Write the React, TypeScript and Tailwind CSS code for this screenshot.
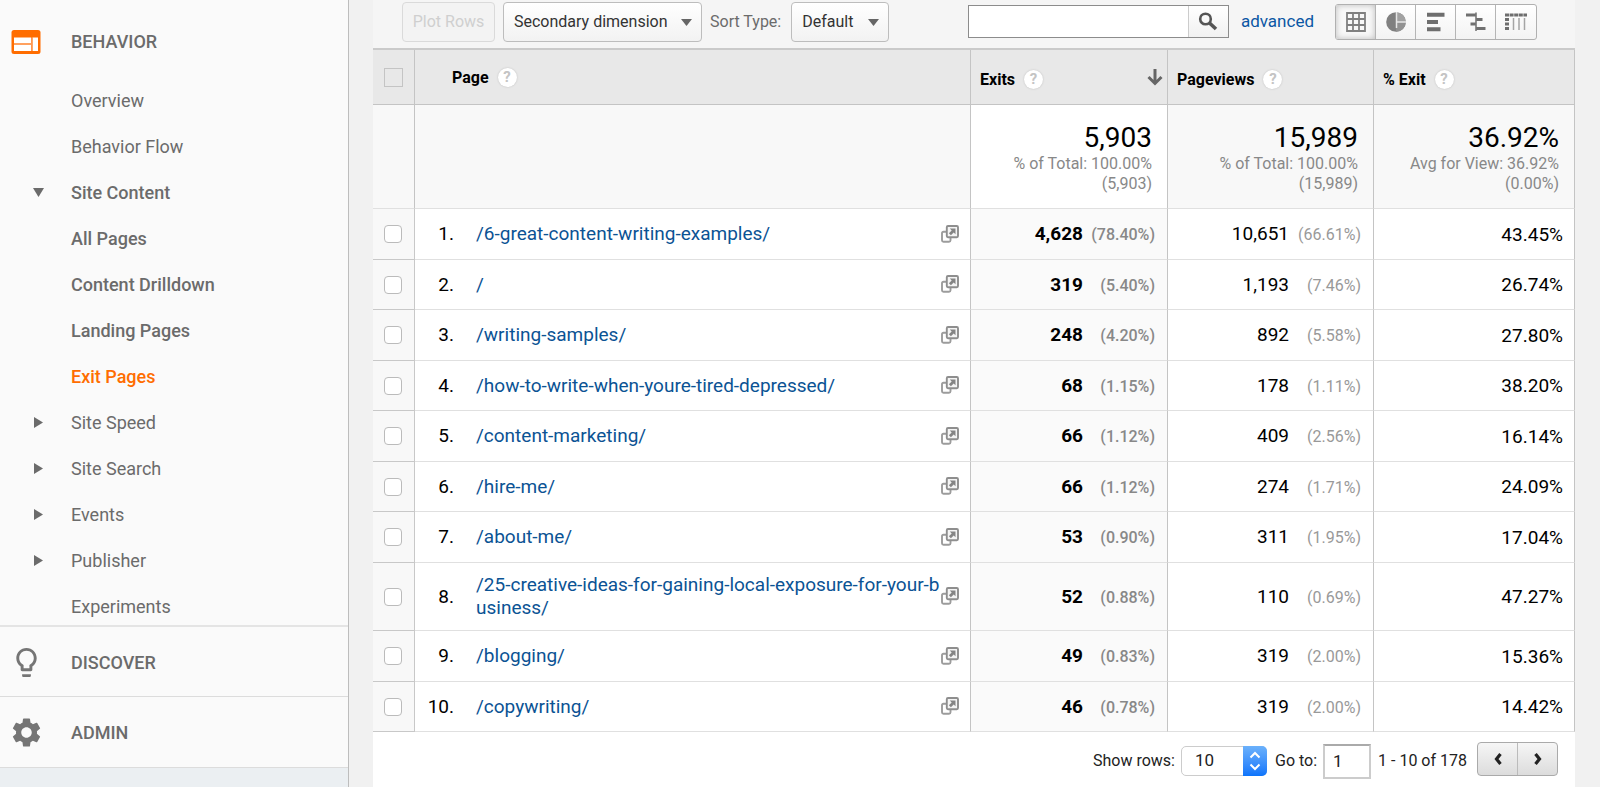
import type { ReactNode } from "react";
import { MdSettings } from "react-icons/md";

type NavItem = { label: string; kind: "link" | "sub" | "open" | "closed"; active?: boolean };

const navItems: NavItem[] = [
  { label: "Overview", kind: "link" },
  { label: "Behavior Flow", kind: "link" },
  { label: "Site Content", kind: "open" },
  { label: "All Pages", kind: "sub" },
  { label: "Content Drilldown", kind: "sub" },
  { label: "Landing Pages", kind: "sub" },
  { label: "Exit Pages", kind: "sub", active: true },
  { label: "Site Speed", kind: "closed" },
  { label: "Site Search", kind: "closed" },
  { label: "Events", kind: "closed" },
  { label: "Publisher", kind: "closed" },
  { label: "Experiments", kind: "link" },
];

const rows = [
  { page: "/6-great-content-writing-examples/", exits: "4,628", exitsPct: "78.40%", views: "10,651", viewsPct: "66.61%", rate: "43.45%" },
  { page: "/", exits: "319", exitsPct: "5.40%", views: "1,193", viewsPct: "7.46%", rate: "26.74%" },
  { page: "/writing-samples/", exits: "248", exitsPct: "4.20%", views: "892", viewsPct: "5.58%", rate: "27.80%" },
  { page: "/how-to-write-when-youre-tired-depressed/", exits: "68", exitsPct: "1.15%", views: "178", viewsPct: "1.11%", rate: "38.20%" },
  { page: "/content-marketing/", exits: "66", exitsPct: "1.12%", views: "409", viewsPct: "2.56%", rate: "16.14%" },
  { page: "/hire-me/", exits: "66", exitsPct: "1.12%", views: "274", viewsPct: "1.71%", rate: "24.09%" },
  { page: "/about-me/", exits: "53", exitsPct: "0.90%", views: "311", viewsPct: "1.95%", rate: "17.04%" },
  { page: "/25-creative-ideas-for-gaining-local-exposure-for-your-business/", exits: "52", exitsPct: "0.88%", views: "110", viewsPct: "0.69%", rate: "47.27%" },
  { page: "/blogging/", exits: "49", exitsPct: "0.83%", views: "319", viewsPct: "2.00%", rate: "15.36%" },
  { page: "/copywriting/", exits: "46", exitsPct: "0.78%", views: "319", viewsPct: "2.00%", rate: "14.42%" },
];

function BehaviorIcon() {
  return (
    <svg width="30" height="24" viewBox="0 0 30 24" className="block">
      <rect x="0.5" y="0" width="29" height="24" rx="2.5" fill="#ff6d00" />
      <path d="M3 7.5h17v6H3zM3 14.5h17v6.500H3zM21.500 7.500h5.500v13.500h-5.500z" fill="#fff" />
      <path d="M3 14h17.500M20.800 7.500v13.500" stroke="#ff9a55" strokeWidth="1.400" />
    </svg>
  );
}

function BulbIcon() {
  return (
    <svg width="35" height="35" viewBox="0 0 24 24" fill="#757575" className="block">
      <path d="M9 21c0 .5.4 1 1 1h4c.6 0 1-.5 1-1v-1H9v1zm3-19C8.100 2 5 5.100 5 9c0 2.400 1.200 4.500 3 5.700V17c0 .5.4 1 1 1h6c.6 0 1-.5 1-1v-2.300c1.800-1.300 3-3.400 3-5.700 0-3.900-3.100-7-7-7zm2.900 11.100l-.9.600V16h-4v-2.300l-.9-.600C7.800 12.200 7 10.600 7 9c0-2.800 2.200-5 5-5s5 2.200 5 5c0 1.600-.8 3.200-2.100 4.100z" />
    </svg>
  );
}

function OpenIcon() {
  return (
    <svg width="18" height="18" viewBox="0 0 18 18" fill="none" className="block">
      <path d="M5 6.800H2.500q-1.500 0-1.500 1.500v7q0 1.500 1.500 1.500H8q1.500 0 1.500-1.500V13" stroke="#9c9c9c" strokeWidth="1.900" />
      <rect x="5.800" y="1" width="11.200" height="11.200" rx="1.200" fill="#f4f4f4" stroke="#8e8e8e" strokeWidth="1.900" />
      <path d="M8.800 3.500h5.700v5.700l-1.800-1.800L9.900 10.200 7.900 8.200l2.800-2.800z" fill="#858585" />
    </svg>
  );
}

function SearchIcon() {
  return (
    <svg width="20" height="20" viewBox="0 0 20 20" fill="none" className="block">
      <circle cx="7.500" cy="7" r="5.300" stroke="#555" strokeWidth="2.600" />
      <path d="M11.500 11l6.500 6" stroke="#555" strokeWidth="3.600" />
    </svg>
  );
}

function Help({ topic }: { topic: string }) {
  return (
    <button
      type="button"
      aria-label={`Help on ${topic}`}
      className="flex h-[19px] w-[19px] items-center justify-center rounded-full bg-white text-[15px] leading-[19px] font-bold text-[#c4c4c4] shadow-[0_0_2px_#bbb]"
    >
      ?
    </button>
  );
}

function ViewButton({ label, active, children }: { label: string; active?: boolean; children: ReactNode }) {
  return (
    <button
      type="button"
      aria-label={label}
      className={
        active
          ? "flex h-full w-10 items-center justify-center border-r border-[#b5b5b5] bg-[#f8f8f8] shadow-[inset_0_0_6px_#bbb]"
          : "flex h-full w-10 items-center justify-center border-r border-[#b5b5b5] last:border-r-0"
      }
    >
      <svg width="24" height="20" viewBox="0 0 24 20" fill="none">
        {children}
      </svg>
    </button>
  );
}

function ViewSwitcher() {
  return (
    <div className="flex h-9 overflow-hidden rounded-[3px] border border-[#b0b0b0] bg-linear-to-b from-white to-[#f3f3f3]">
      <ViewButton label="Table" active>
        <path d="M3 1h18v18H3zM3 7h18M3 13h18M9 1v18M15 1v18" stroke="#808080" strokeWidth="1.800" />
      </ViewButton>
      <ViewButton label="Percentage">
        <circle cx="12" cy="10" r="9.800" fill="#808080" />
        <path d="M12 .2a9.800 9.800 0 0 1 9.800 9.800H12z" fill="#a2a2a2" />
        <path d="M12 10h9.800a9.800 9.800 0 0 1-9.800 9.800z" fill="#929292" />
        <path d="M12.500 0v16M12 10h10" stroke="#e6e6e6" strokeWidth="1.500" />
      </ViewButton>
      <ViewButton label="Performance">
        <path d="M3 2.800h17.500M3 10h11M3 17.200h13.500" stroke="#6e6e6e" strokeWidth="4" />
      </ViewButton>
      <ViewButton label="Comparison">
        <path d="M2 3h10M12 7.500h6.500M6.500 12h5.500M12 16.500h9.500" stroke="#707070" strokeWidth="2.800" />
        <path d="M12 .5v18.500" stroke="#777" strokeWidth="1.600" />
      </ViewButton>
      <ViewButton label="Pivot">
        <path d="M1 3h22" stroke="#6e6e6e" strokeWidth="3" strokeDasharray="4 .600" />
        <path d="M1 7.500h4M1 12h4M1 16.500h4" stroke="#6e6e6e" strokeWidth="3" />
        <path d="M9.500 6v12M15 6v12M20.500 6v12" stroke="#a5a5a5" strokeWidth="1.500" />
      </ViewButton>
    </div>
  );
}

function DropDown({ label, value, width }: { label: string; value: string; width: string }) {
  return (
    <span className={`relative block ${width}`}>
      <select
        aria-label={label}
        className="h-10 w-full appearance-none rounded-[4px] border border-[#bdbdbd] bg-linear-to-b from-white to-[#f2f2f2] pl-[10px] text-[16px] text-[#333]"
      >
        <option>{value}</option>
      </select>
      <svg width="11" height="7" viewBox="0 0 11 7" className="pointer-events-none absolute top-[17px] right-[10px]">
        <path d="M0 0h11L5.500 7z" fill="#666" />
      </svg>
    </span>
  );
}

function Sidebar() {
  return (
    <nav className="flex w-[349px] shrink-0 flex-col border-r border-[#bdbdbd] bg-[#fafafa] text-[18px] text-[#6b6b6b]">
      <a href="#behavior" className="flex h-[81px] items-center pt-[2px] pl-[11px] font-medium">
        <span className="w-[60px]">
          <BehaviorIcon />
        </span>
        BEHAVIOR
      </a>
      <ul className="flex flex-col gap-2 border-b-2 border-[#e4e4e4]">
        {navItems.map((item) => (
          <li key={item.label}>
            <a
              href={`#${item.label}`}
              className={
                item.active
                  ? "flex h-[38px] items-center font-medium text-[#ff6d00]"
                  : item.kind === "sub" || item.kind === "open"
                    ? "flex h-[38px] items-center font-medium"
                    : "flex h-[38px] items-center"
              }
            >
              <span className="flex w-[71px] shrink-0 justify-center pl-[6px]">
                {item.kind === "open" && (
                  <svg width="11" height="9" viewBox="0 0 11 9">
                    <path d="M0 0h11L5.500 9z" fill="#6b6b6b" />
                  </svg>
                )}
                {item.kind === "closed" && (
                  <svg width="9" height="11" viewBox="0 0 9 11">
                    <path d="M0 0v11l9-5.500z" fill="#6b6b6b" />
                  </svg>
                )}
              </span>
              {item.label}
            </a>
          </li>
        ))}
      </ul>
      <a href="#discover" className="flex h-[70px] items-center border-b border-[#dcdcdc] pt-px pl-[9px] font-medium">
        <span className="w-[62px]">
          <BulbIcon />
        </span>
        DISCOVER
      </a>
      <a href="#admin" className="flex h-[71px] items-center border-b border-[#dcdcdc] pt-px pl-[9px] font-medium">
        <span className="w-[62px]">
          <MdSettings className="block h-[35px] w-[35px] text-[#757575]" />
        </span>
        ADMIN
      </a>
      <div className="grow bg-[#ebeff2]" />
    </nav>
  );
}

function Toolbar() {
  return (
    <div className="flex h-12 items-center bg-[#f5f5f5] pr-[38px] pb-[5px] pl-[29px]">
      <button
        type="button"
        disabled
        className="h-10 w-[93px] rounded-[4px] border border-[#dadada] bg-[#f3f3f3] text-[16px] text-[#cfcfcf]"
      >
        Plot Rows
      </button>
      <div className="ml-2">
        <DropDown label="Secondary dimension" value="Secondary dimension" width="w-[199px]" />
      </div>
      <span className="ml-2 text-[16px] text-[#6b6b6b]">Sort Type:</span>
      <div className="ml-[10px]">
        <DropDown label="Sort type" value="Default" width="w-[98px]" />
      </div>
      <form className="ml-auto flex h-[33px] w-[261px] border border-[#8c8c8c]">
        <input type="search" aria-label="Search table" className="min-w-0 grow bg-white px-2 text-[16px] outline-none" />
        <button
          type="button"
          aria-label="Search"
          className="flex w-10 items-center justify-center border-l border-[#ccc] bg-linear-to-b from-white to-[#f1f1f1]"
        >
          <SearchIcon />
        </button>
      </form>
      <a href="#advanced" className="mr-[21px] ml-3 text-[17px] text-[#0b57a4]">
        advanced
      </a>
      <ViewSwitcher />
    </div>
  );
}

function MetricHead({ label, sorted }: { label: string; sorted?: boolean }) {
  return (
    <th className="border-r border-b border-[#c4c4c4] pt-[5px] pl-[9px] text-left font-bold">
      <div className="flex items-center gap-[9px]">
        {label}
        <Help topic={label} />
        {sorted && (
          <svg width="16" height="17" viewBox="0 0 16 17" fill="none" className="mr-1 mb-1 ml-auto">
            <path d="M8 0v14M1.500 8L8 14.500 14.500 8" stroke="#666" strokeWidth="3" />
          </svg>
        )}
      </div>
    </th>
  );
}

function Total({ value, note, detail, sorted }: { value: string; note: string; detail: string; sorted?: boolean }) {
  return (
    <td
      className={
        sorted
          ? "border-r border-b border-r-[#c4c4c4] border-b-[#e0e0e0] bg-white pt-[3px] pr-[15px] text-right"
          : "border-r border-b border-r-[#c4c4c4] border-b-[#e0e0e0] pt-[3px] pr-[15px] text-right"
      }
    >
      <div className="text-[28px] leading-8">{value}</div>
      <div className="text-[16px] leading-5 text-[#888]">{note}</div>
      <div className="text-[16px] leading-5 text-[#888]">{detail}</div>
    </td>
  );
}

function ReportTable() {
  return (
    <table className="w-full table-fixed border-separate border-spacing-0 border-t-2 border-[#cacaca] text-black">
      <colgroup>
        <col className="w-[42px]" />
        <col />
        <col className="w-[197px]" />
        <col className="w-[206px]" />
        <col className="w-[201px]" />
      </colgroup>
      <thead>
        <tr className="h-[55px] bg-[#e8e8e8] text-[16px]">
          <th className="border-r border-b border-[#c4c4c4]">
            <input
              type="checkbox"
              aria-label="Select all rows"
              className="mx-auto block h-[19px] w-[19px] appearance-none border border-[#c4c4c4]"
            />
          </th>
          <th className="border-r border-b border-[#c4c4c4] pt-px pl-[37px] text-left font-bold">
            <div className="flex items-center gap-[9px]">
              Page
              <Help topic="Page" />
            </div>
          </th>
          <MetricHead label="Exits" sorted />
          <MetricHead label="Pageviews" />
          <MetricHead label="% Exit" />
        </tr>
      </thead>
      <tbody>
        <tr className="h-[104px] bg-[#f8f8f8]">
          <td className="border-r border-b border-r-[#c4c4c4] border-b-[#e0e0e0]" />
          <td className="border-r border-b border-r-[#c4c4c4] border-b-[#e0e0e0]" />
          <Total value="5,903" note="% of Total: 100.00%" detail="(5,903)" sorted />
          <Total value="15,989" note="% of Total: 100.00%" detail="(15,989)" />
          <Total value="36.92%" note="Avg for View: 36.92%" detail="(0.00%)" />
        </tr>
      </tbody>
      <tbody className="text-[19px] leading-[23px]">
        {rows.map((row, i) => (
          <tr key={row.page} className="odd:h-[51px] even:h-[50px]">
            <td className="border-r border-b border-[#c8c8c8] bg-[#f8f8f8] pr-[2px]">
              <input
                type="checkbox"
                aria-label={`Select ${row.page}`}
                className="mx-auto block h-[18px] w-[18px] appearance-none rounded-[4px] border border-[#bbb] bg-white"
              />
            </td>
            <td className="border-r border-b border-r-[#c4c4c4] border-b-[#e0e0e0] pt-[10px] pr-[11px] pb-[11px]">
              <div className="flex items-center">
                <span className="w-[39px] shrink-0 text-right">{i + 1}.</span>
                <a href={`#${row.page}`} className="ml-[22px] grow break-all text-[#0b5394]">
                  {row.page}
                </a>
                <a href={`#open${row.page}`} aria-label={`Open ${row.page}`} className="shrink-0">
                  <OpenIcon />
                </a>
              </div>
            </td>
            <td className="border-r border-b border-r-[#c4c4c4] border-b-[#e0e0e0] bg-[#fafafa] pr-3">
              <div className="flex items-baseline justify-end font-bold">
                {row.exits}
                <span className="w-[72px] text-right text-[16px] font-medium text-[#888]">({row.exitsPct})</span>
              </div>
            </td>
            <td className="border-r border-b border-r-[#c4c4c4] border-b-[#e0e0e0] pr-3">
              <div className="flex items-baseline justify-end">
                {row.views}
                <span className="w-[72px] text-right text-[16px] text-[#999]">({row.viewsPct})</span>
              </div>
            </td>
            <td className="border-r border-b border-r-[#c4c4c4] border-b-[#e0e0e0] pr-[11px] text-right">{row.rate}</td>
          </tr>
        ))}
      </tbody>
    </table>
  );
}

function Pager() {
  return (
    <div className="flex items-center justify-end pt-[10px] pr-[17px] text-[16px] text-[#222]">
      <label htmlFor="row-count">Show rows:</label>
      <span className="relative ml-[6px] block w-[86px]">
        <select
          id="row-count"
          className="h-[30px] w-full appearance-none rounded-[5px] border border-[#ccc] bg-white pl-[13px] text-[17px]"
        >
          <option>10</option>
        </select>
        <span className="pointer-events-none absolute top-0 right-0 flex h-[30px] w-6 items-center justify-center rounded-r-[5px] bg-linear-to-b from-[#6bb1fb] to-[#0a74fb]">
          <svg width="12" height="20" viewBox="0 0 12 20" fill="none">
            <path d="M1.500 6.500L6 2l4.500 4.500M1.500 13.500L6 18l4.500-4.500" stroke="#fff" strokeWidth="2" />
          </svg>
        </span>
      </span>
      <label htmlFor="go-to" className="ml-2">
        Go to:
      </label>
      <input
        id="go-to"
        type="text"
        defaultValue="1"
        className="ml-[6px] h-[35px] w-12 border-2 border-[#ccc] border-t-[#aaa] bg-white pl-2 text-[17px]"
      />
      <span className="ml-[7px]">1 - 10 of 178</span>
      <div className="mb-1 ml-[10px] flex h-[34px] w-[81px] rounded-[4px] border border-[#aaa] bg-linear-to-b from-[#f6f6f6] to-[#dcdcdc]">
        <button type="button" aria-label="Previous page" className="flex flex-1 items-center justify-center border-r border-[#bbb]">
          <svg width="8" height="12" viewBox="0 0 8 12" fill="none">
            <path d="M6.500 1L2.500 6l4 5" stroke="#222" strokeWidth="3.200" />
          </svg>
        </button>
        <button type="button" aria-label="Next page" className="flex flex-1 items-center justify-center">
          <svg width="8" height="12" viewBox="0 0 8 12" fill="none">
            <path d="M1.500 1l4 5-4 5" stroke="#222" strokeWidth="3.200" />
          </svg>
        </button>
      </div>
    </div>
  );
}

export default function App() {
  return (
    <div className="flex min-h-screen bg-[#f1f1f1] font-[Roboto,sans-serif]">
      <Sidebar />
      <main className="min-w-0 grow pr-[25px] pl-6">
        <div className="flex min-h-full flex-col bg-white">
          <Toolbar />
          <ReportTable />
          <Pager />
        </div>
      </main>
    </div>
  );
}
